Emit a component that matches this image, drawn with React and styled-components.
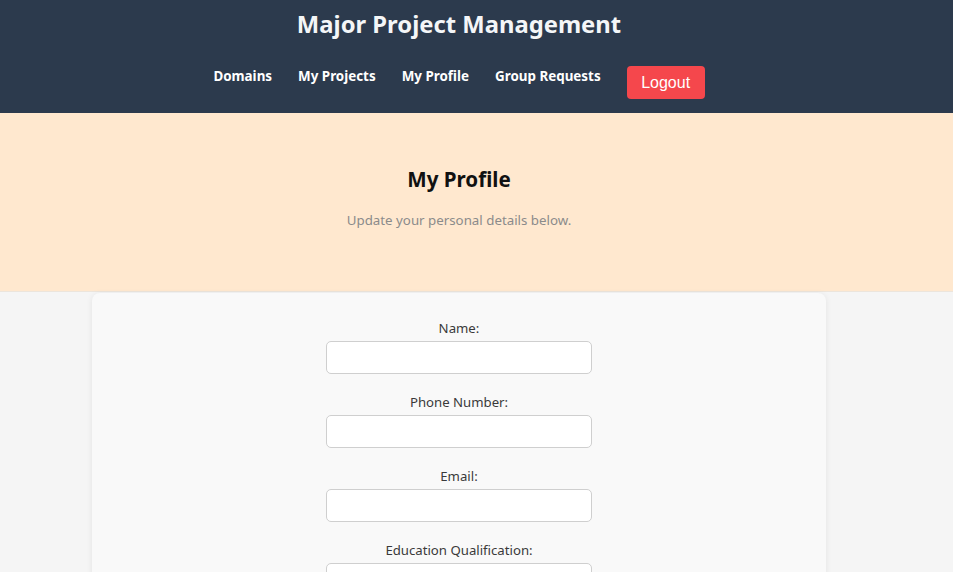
import styled, { createGlobalStyle } from 'styled-components';

const GlobalStyle = createGlobalStyle`
  body {
    margin: 0;
    background: #f5f5f5;
    font-family: "Noto Sans", "Open Sans", sans-serif;
  }
`;

const Header = styled.header`
  background: #2c3a4d;
  height: 113px;
  padding-right: 35px;
  display: flex;
  flex-direction: column;
  align-items: center;
`;

const Title = styled.h1`
  margin: 6px 0 0;
  color: #f4f6f8;
  font-size: 23.8px;
  font-weight: 700;
  line-height: 36px;
`;

const Nav = styled.nav`
  display: flex;
  align-items: center;
  gap: 26px;
  margin-top: 24px;
`;

const NavLink = styled.a`
  color: #ffffff;
  font-size: 13.4px;
  font-weight: 700;
  text-decoration: none;
  cursor: pointer;
  padding-bottom: 14px;
`;

const LogoutButton = styled.button`
  background: #f5474c;
  color: #ffffff;
  border: none;
  border-radius: 4px;
  width: 78px;
  height: 33px;
  font-family: "Liberation Sans", Arial, sans-serif;
  font-size: 16px;
  cursor: pointer;
`;

const Hero = styled.section`
  background: #ffe8cf;
  height: 178px;
  padding-right: 35px;
  border-bottom: 1px solid #ece5dc;
  display: flex;
  flex-direction: column;
  align-items: center;
`;

const HeroTitle = styled.h2`
  margin: 51px 0 0;
  font-size: 20.6px;
  font-weight: 700;
  color: #111;
  line-height: 30px;
`;

const HeroText = styled.p`
  margin: 17px 0 0;
  font-size: 13.3px;
  color: #8b8b8b;
`;

const Main = styled.main`
  padding-right: 35px;
`;

const Card = styled.div`
  width: 80%;
  margin: 1px auto 0;
  background: #f9f9f9;
  border-radius: 8px;
  box-shadow: 0 1px 6px rgba(0, 0, 0, 0.08);
  padding: 26px 0 0;
  height: 300px;
  display: flex;
  flex-direction: column;
  align-items: center;
`;

const Field = styled.div`
  display: flex;
  flex-direction: column;
  align-items: center;
  margin-bottom: 19px;
`;

const Label = styled.label`
  font-size: 13.2px;
  color: #3a3a3a;
  line-height: 18px;
  margin-bottom: 4px;
`;

const Input = styled.input`
  box-sizing: border-box;
  width: 266px;
  height: 33px;
  border: 1px solid #cfcfcf;
  border-radius: 5px;
  background: #fff;
`;

const fields = ['Name:', 'Phone Number:', 'Email:', 'Education Qualification:'];

export default function App() {
  return (
    <>
      <GlobalStyle />
      <Header>
        <Title>Major Project Management</Title>
        <Nav>
          <NavLink>Domains</NavLink>
          <NavLink>My Projects</NavLink>
          <NavLink>My Profile</NavLink>
          <NavLink>Group Requests</NavLink>
          <LogoutButton>Logout</LogoutButton>
        </Nav>
      </Header>
      <Hero>
        <HeroTitle>My Profile</HeroTitle>
        <HeroText>Update your personal details below.</HeroText>
      </Hero>
      <Main>
        <Card>
          {fields.map((f) => (
            <Field key={f}>
              <Label>{f}</Label>
              <Input />
            </Field>
          ))}
        </Card>
      </Main>
    </>
  );
}
